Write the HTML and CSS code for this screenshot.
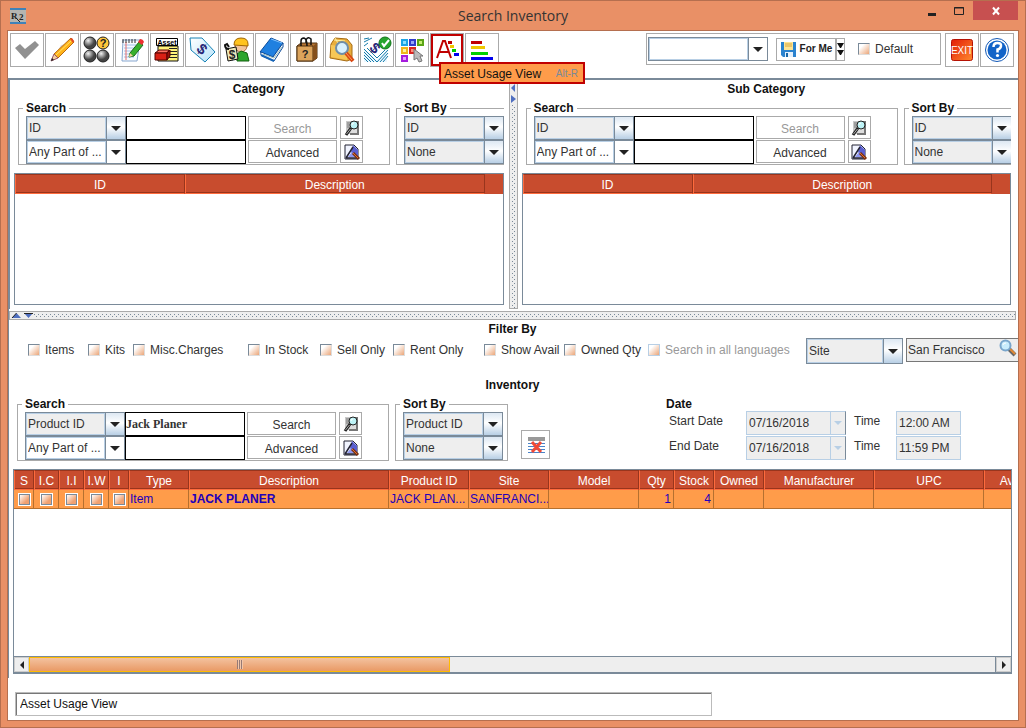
FILE: index.html
```html
<!DOCTYPE html>
<html lang="en">
<head>
<meta charset="utf-8">
<title>Search Inventory</title>
<link rel="stylesheet" href="styles.css">
</head>
<body>
<svg class="defs" aria-hidden="true">
  <symbol id="find" viewBox="0 0 18 18">
    <path d="M3 2h8v13H3z" fill="#c8c8c8"/><path d="M4 4h4M4 6h3M4 8h3" stroke="#777"/>
    <path d="M10 3h5v12H7" fill="#ddd" stroke="#777" stroke-width="2"/>
    <circle cx="11" cy="6" r="4" fill="#bdf3f6" stroke="#222"/><path d="M9 6a2 2 0 0 1 2-2" stroke="#fff" fill="none"/>
    <path d="M8 9l-5 7" stroke="#222" stroke-width="3"/><path d="M7.500 10l-4 5" stroke="#aaa"/>
  </symbol>
  <symbol id="clearfind" viewBox="0 0 18 18">
    <path d="M2 2h9l4 4v10H2z" fill="#f1f4ff" stroke="#223"/><path d="M10 2l5 5v9l-7-7z" fill="#5a5fd0"/>
    <path d="M3 15L10 4M3 15h11" fill="none" stroke="#223" stroke-width="1.500"/><path d="M5 14l4-5 4 5z" fill="#8f98f0"/>
    <path d="M10 10l6 6" stroke="#7a3010" stroke-width="3"/><path d="M10 10l5 5" stroke="#e07030"/>
  </symbol>
</svg>
<div class="window">
  <header class="titlebar">
    <svg class="logo" width="16" height="16" viewBox="0 0 16 16"><path d="M0 0h16v16H0z" fill="#b5b5b0"/><path d="M0 0h16v2H0zM0 14h16v2H0z" fill="#3f82b8"/><text x="1" y="11" class="logo-text">R</text><text x="9" y="12" class="logo-text">2</text><path d="M6 10l4 4" stroke="#222"/></svg>
    <h1>Search Inventory</h1>
    <div class="controls">
      <button class="ctl" aria-label="Minimize"><svg width="10" height="16"><path d="M1 13.500h8" stroke="#222" stroke-width="3"/></svg></button>
      <button class="ctl" aria-label="Maximize"><svg width="12" height="16"><path d="M1.500 6.500h9v7h-9zM1 7h10" fill="none" stroke="#222"/></svg></button>
      <button class="ctl close" aria-label="Close"><svg width="10" height="10"><path d="M2 1.500l6 7M8 1.500l-6 7" stroke="#fff" stroke-width="2"/></svg></button>
    </div>
  </header>

  <main class="client">
    <nav class="toolbar">
      <div class="tools">
        <button class="tool" aria-label="Select"><svg viewBox="0 0 32 32"><path d="M4 14l5-4 5 5L24 7l4 4-14 14z" fill="#919191"/></svg></button>
        <button class="tool" aria-label="Edit"><svg viewBox="0 0 32 32"><path d="M5 27L15 11l5-1-8 11z" fill="#ddd"/><path d="M8 20L25 4l3 4-16 16z" fill="#ffb319" stroke="#b96810"/><path d="M10 21L26 6" stroke="#ffe36b" stroke-width="1"/><path d="M8 20l4 4-7 3z" fill="#f4cf9d" stroke="#956"/><path d="M24 5l2-1 2 3-1 2z" fill="#e44824"/><path d="M5 27l3-1-2-2z" fill="#222"/></svg></button>
        <button class="tool" aria-label="Status"><svg viewBox="0 0 32 32"><defs><radialGradient id="ball" cx=".35" cy=".3"><stop offset="0" stop-color="#f2f2f2"/><stop offset=".5" stop-color="#999"/><stop offset="1" stop-color="#444"/></radialGradient></defs><g fill="url(#ball)" stroke="#222"><circle cx="9" cy="9" r="6"/><circle cx="9" cy="22" r="6"/><circle cx="22" cy="22" r="6"/></g><circle cx="22" cy="9" r="6" fill="#ffc63c" stroke="#222"/><text x="22" y="13" class="qmark">?</text></svg></button>
        <button class="tool" aria-label="Notes"><svg viewBox="0 0 32 32"><path d="M7 6h17l-3 21H6z" fill="#f7fbff" stroke="#88a7cf"/><path d="M8 11h12M8 14h12M8 17h11M8 20h10M8 23h10" stroke="#9fc0ea"/><path d="M10 8v18" stroke="#e86a6a"/><path d="M7 5v4M10 5v4M13 5v4M16 5v4M19 5v4" stroke="#333"/><path d="M14 19l9-11 4 3-9 11-5 1z" fill="#38b02d" stroke="#17691a"/><path d="M22 8l2-3q3 0 4 3l-2 3z" fill="#ed3030"/><path d="M14 19l-1 4 4-1z" fill="#f4cf9d"/></svg></button>
        <button class="tool" aria-label="Asset"><svg viewBox="0 0 32 32"><path d="M7 12h20v15H7z" fill="#fff37a" stroke="#111"/><path d="M18 14.500h8M18 17.500h8M18 20.500h8M18 23.500h8" stroke="#222"/><path d="M5.500 4.500h21v7h-21z" fill="#fff" stroke="#000"/><text x="16" y="10.500" class="asset">Asset</text><path d="M4 19l4-3h10l-2 3z" fill="#ff7263" stroke="#500"/><path d="M4 19h12v7H4z" fill="#d92015" stroke="#500"/><path d="M16 19l3-3v6l-3 4z" fill="#98120c" stroke="#500"/></svg></button>
        <button class="tool" aria-label="Price tag"><svg viewBox="0 0 32 32"><defs><linearGradient id="tag" x2="1" y2="1"><stop offset="0" stop-color="#fff"/><stop offset="1" stop-color="#b5e2fa"/></linearGradient></defs><path d="M4 4h12l13 14-10 10L5 16z" fill="url(#tag)" stroke="#1682b5"/><text x="0" y="5" class="dollar" transform="translate(16 15) rotate(42)">$</text></svg></button>
        <button class="tool" aria-label="Contractor"><svg viewBox="0 0 32 32"><circle cx="20" cy="12" r="6" fill="#f2c39a" stroke="#a66b42"/><path d="M13 11q0-7 7-7t7 6v2z" fill="#ffc31e" stroke="#a06500"/><path d="M16 20l4-3 6 2 2 8H16z" fill="#2ca52c" stroke="#12610f"/><path d="M5 15l10-2 2 12-10 2z" fill="#efe8b8" stroke="#111"/><path d="M8 15q-4 0-4-4l2-1 2 3" fill="none" stroke="#111" stroke-width="2"/><text x="11" y="25" class="dollar small">$</text></svg></button>
        <button class="tool" aria-label="Catalog"><svg viewBox="0 0 32 32"><path d="M4 18L15 4l12 5-10 14z" fill="#1f80e0" stroke="#0b4c9c"/><path d="M15 5l11 4" stroke="#7fc3ff"/><path d="M5 18q-1 3 1 4l12 5 9-14v-4L17 23z" fill="#fff" stroke="#0b4c9c"/><path d="M7 20l11 4 8-11" fill="none" stroke="#9bb" /><path d="M5 21l13 6" stroke="#1464b8" stroke-width="2" fill="none"/></svg></button>
        <button class="tool" aria-label="Unknown item"><svg viewBox="0 0 32 32"><path d="M6 12l4-3h16v15l-4 3H6z" fill="#b57535" stroke="#51300f"/><path d="M6 12h16v15H6z" fill="#dca45c" stroke="#51300f"/><path d="M22 12l4-3v15l-4 3z" fill="#85501c"/><path d="M10 12V7q0-3 3-3 3 1 3 8M15 9V6q2-4 5-1v6" fill="none" stroke="#111" stroke-width="1.500"/><text x="14" y="24" class="qmark">?</text></svg></button>
        <button class="tool" aria-label="Search box"><svg viewBox="0 0 32 32"><path d="M5 10l4-6 12 1 5 6v14l-5 2-17-3z" fill="#e9ae3d" stroke="#a76c12"/><path d="M5 11l16 2v13L5 23z" fill="#f7c756"/><path d="M9 4l4 7M8 6l11 1" stroke="#fff0a0"/><circle cx="16" cy="14" r="6" fill="#d8f1ff" stroke="#6f8ea8" stroke-width="2"/><path d="M20 19l7 8" stroke="#d94812" stroke-width="4"/><path d="M20 19l6 7" stroke="#ff9d55"/></svg></button>
        <button class="tool" aria-label="Approve price"><svg viewBox="0 0 32 32"><path d="M3 15v13h23V15L16 26z" fill="#eaf7ff"/><path d="M3 5l5-1M3 8l8-4M3 12l4-3M3 15l13 13M3 18l10 10M3 21l7 7M3 24l4 4M16 28l11-12M19 28l8-9M22 28l5-6M6 14l10 10 8-8" stroke="#167caa" fill="none"/><text x="0" y="5" class="dollar" transform="translate(14 14) rotate(42)">$</text><circle cx="24" cy="9" r="6" fill="#27a52c" stroke="#12751a"/><path d="M21 9l2 3 5-6" stroke="#fff" stroke-width="2" fill="none"/></svg></button>
        <button class="tool" aria-label="Pick color"><svg viewBox="0 0 32 32"><g stroke-width="2"><path d="M6 6h5v5H6z" fill="#8be0ff" stroke="#1ca4e5"/><path d="M14 6h5v5h-5z" fill="#96a6f8" stroke="#303ccc"/><path d="M22 6h5v5h-5z" fill="#c5ed75" stroke="#5ba516"/><path d="M6 14h5v5H6z" fill="#fff29a" stroke="#efb51b"/><path d="M14 14h5v5h-5z" fill="#ff8d7a" stroke="#db2420"/><path d="M6 22h5v5H6z" fill="#e6a0ff" stroke="#a51bdd"/></g><path d="M18 15v11l3-2 2 4 3-1-2-5h3z" fill="#bbb" stroke="#777"/></svg></button>
        <div class="tool-anchor">
          <button class="tool active" aria-label="Asset Usage View" aria-describedby="tip"><svg viewBox="0 0 32 32"><path d="M6 24L12 7h2l6 17M8 18h10" fill="none" stroke="#c00000" stroke-width="2"/><path d="M17 8.500h4" stroke="#c00000" stroke-width="3"/><path d="M19 12.500h4" stroke="#efc800" stroke-width="3"/><path d="M21 16.500h4" stroke="#0c0" stroke-width="3"/><path d="M23 20.500h5" stroke="#00e" stroke-width="3"/></svg></button>
          <div class="tooltip" id="tip" role="tooltip">Asset Usage View <kbd>Alt-R</kbd></div>
        </div>
        <button class="tool" aria-label="Usage chart"><svg viewBox="0 0 32 32"><path d="M5 8.500h11" stroke="#c00000" stroke-width="3"/><path d="M5 13.500h14" stroke="#efc800" stroke-width="3"/><path d="M5 19.500h17" stroke="#00d000" stroke-width="3"/><path d="M5 24.500h22" stroke="#00e" stroke-width="3"/></svg></button>
      </div>
      <div class="views">
        <select class="combo plain view-combo" aria-label="Saved view"><option></option></select>
        <button class="forme"><svg width="17" height="17" viewBox="0 0 17 17"><path d="M1 1h15v15H3l-2-2z" fill="#2b83cf"/><path d="M4 1h9v8H4z" fill="#ffe593"/><path d="M5 3h7M5 5h7" stroke="#d7a642"/><path d="M5 11h8v5H5z" fill="#e5f1fc"/><path d="M6 12h2v4H6z" fill="#1766a8"/></svg>For Me</button>
        <button class="more" aria-label="More save options"><svg width="7" height="16" viewBox="0 0 7 16"><path d="M0 2h7L4 7H3zM0 9h7l-3 5H3z" fill="#111"/></svg></button>
        <label class="check"><input type="checkbox">Default</label>
      </div>
      <div class="tools">
        <button class="tool" aria-label="Exit"><svg viewBox="0 0 32 32"><defs><linearGradient id="exit" x2="1" y2="1"><stop offset="0" stop-color="#e21b08"/><stop offset="1" stop-color="#ff8a2d"/></linearGradient></defs><rect x="5.500" y="5.500" width="21" height="21" rx="2" fill="url(#exit)" stroke="#b51204"/><text x="16" y="20" class="exit">EXIT</text></svg></button>
        <button class="tool" aria-label="Help"><svg viewBox="0 0 32 32"><circle cx="16" cy="16" r="11.500" fill="#fff" stroke="#1158b7" stroke-width="1"/><circle cx="16" cy="16" r="9.500" fill="#1263c8"/><path d="M12.500 13q0-4 4-4t3.500 3-3.500 3.500v3" fill="none" stroke="#fff" stroke-width="2.500"/><circle cx="16.500" cy="21.500" r="1.600" fill="#fff"/></svg></button>
      </div>
    </nav>

    <div class="work">
      <div class="panes">
        <section class="pane">
          <h2>Category</h2>
          <div class="criteria">
            <fieldset class="search"><legend>Search</legend>
              <div class="fields">
                <select class="combo" aria-label="Category field"><option>ID</option></select><input class="term" type="text" aria-label="Category term"><button class="action" disabled>Search</button><button class="mini" aria-label="Find category"><svg><use href="#find"/></svg></button>
                <select class="combo plain" aria-label="Category match"><option>Any Part of ...</option></select><input class="term" type="text" aria-label="Second category term"><button class="action">Advanced</button><button class="mini" aria-label="Clear category search"><svg><use href="#clearfind"/></svg></button>
              </div>
            </fieldset>
            <fieldset class="sort open"><legend>Sort By</legend>
              <select class="combo" aria-label="Category first sort"><option>ID</option></select>
              <select class="combo" aria-label="Category second sort"><option>None</option></select>
            </fieldset>
          </div>
          <div class="list"><table><colgroup><col class="w-id"><col><col class="w-end"></colgroup><thead><tr><th>ID</th><th>Description</th><td class="corner"></td></tr></thead></table></div>
        </section>
        <div class="divider upright"><svg width="7" height="24" viewBox="0 0 7 24"><path d="M5 3v8L1 7zM1 14v8l5-4z" fill="#4f6fc0"/></svg></div>
        <section class="pane">
          <h2>Sub Category</h2>
          <div class="criteria">
            <fieldset class="search"><legend>Search</legend>
              <div class="fields">
                <select class="combo" aria-label="Sub category field"><option>ID</option></select><input class="term" type="text" aria-label="Sub category term"><button class="action" disabled>Search</button><button class="mini" aria-label="Find sub category"><svg><use href="#find"/></svg></button>
                <select class="combo plain" aria-label="Sub category match"><option>Any Part of ...</option></select><input class="term" type="text" aria-label="Second sub category term"><button class="action">Advanced</button><button class="mini" aria-label="Clear sub category search"><svg><use href="#clearfind"/></svg></button>
              </div>
            </fieldset>
            <fieldset class="sort open"><legend>Sort By</legend>
              <select class="combo" aria-label="Sub category first sort"><option>ID</option></select>
              <select class="combo" aria-label="Sub category second sort"><option>None</option></select>
            </fieldset>
          </div>
          <div class="list"><table><colgroup><col class="w-id"><col><col class="w-end"></colgroup><thead><tr><th>ID</th><th>Description</th><td class="corner"></td></tr></thead></table></div>
        </section>
      </div>
      <div class="divider level"><svg width="24" height="7" viewBox="0 0 24 7"><path d="M2 6h9L6.500 1zM14 1h9l-4.500 5z" fill="#4f6fc0"/><path d="M2 6L6.500 1M14 1.500h9" stroke="#222"/></svg></div>

      <section class="inventory">
        <h2>Filter By</h2>
        <div class="filters">
          <label class="check"><input type="checkbox">Items</label>
          <label class="check"><input type="checkbox">Kits</label>
          <label class="check"><input type="checkbox">Misc.Charges</label>
          <label class="check"><input type="checkbox">In Stock</label>
          <label class="check"><input type="checkbox">Sell Only</label>
          <label class="check"><input type="checkbox">Rent Only</label>
          <label class="check"><input type="checkbox">Show Avail</label>
          <label class="check"><input type="checkbox">Owned Qty</label>
          <label class="check off"><input type="checkbox" disabled>Search in all languages</label>
          <select class="combo site" aria-label="Location type"><option>Site</option></select>
          <div class="lookup"><input type="text" value="San Francisco" aria-label="Site name"><svg width="18" height="18" viewBox="0 0 18 18"><path d="M10 10l6 6" stroke="#666" stroke-width="4"/><path d="M11 10l5 5" stroke="#e28a34" stroke-width="2"/><circle cx="6.500" cy="6.500" r="5" fill="#c9ecfc" stroke="#79a5cb" stroke-width="2"/><path d="M4 6q0-2 3-2" stroke="#fff" fill="none"/></svg></div>
        </div>
        <h2>Inventory</h2>
        <div class="criteria">
          <fieldset class="search"><legend>Search</legend>
            <div class="fields">
              <select class="combo" aria-label="Inventory field"><option>Product ID</option></select><input class="term" type="text" value="Jack Planer" aria-label="Inventory term"><button class="action">Search</button><button class="mini" aria-label="Find inventory"><svg><use href="#find"/></svg></button>
              <select class="combo plain" aria-label="Inventory match"><option>Any Part of ...</option></select><input class="term" type="text" aria-label="Second inventory term"><button class="action">Advanced</button><button class="mini" aria-label="Clear inventory search"><svg><use href="#clearfind"/></svg></button>
            </div>
          </fieldset>
          <fieldset class="sort"><legend>Sort By</legend>
            <select class="combo" aria-label="Inventory first sort"><option>Product ID</option></select>
            <select class="combo" aria-label="Inventory second sort"><option>None</option></select>
          </fieldset>
          <button class="clear" aria-label="Clear results"><svg width="18" height="18" viewBox="0 0 18 18"><path d="M1 1h17v4H1z" fill="#999"/><path d="M1 7.500h17M1 10.500h17M1 13.500h17M1 16.500h17" stroke="#4a83c8"/><path d="M5 6l9 10M14 6L5 16" stroke="#f04a38" stroke-width="3"/></svg></button>
          <div class="dates">
            <h3>Date</h3>
            <label for="d1">Start Date</label><select id="d1" class="date" disabled><option>07/16/2018</option></select><label for="t1">Time</label><input id="t1" type="text" value="12:00 AM" readonly>
            <label for="d2">End Date</label><select id="d2" class="date" disabled><option>07/16/2018</option></select><label for="t2">Time</label><input id="t2" type="text" value="11:59 PM" readonly>
          </div>
        </div>
        <div class="results">
          <div class="grid">
            <table>
              <colgroup><col class="c20"><col class="c25"><col class="c25"><col class="c25"><col class="c20"><col class="c60"><col class="c200"><col class="c80"><col class="c80"><col class="c90"><col class="c35"><col class="c40"><col class="c50"><col class="c110"><col class="c110"><col class="c80"></colgroup>
              <thead><tr><th>S</th><th>I.C</th><th>I.I</th><th>I.W</th><th>I</th><th>Type</th><th>Description</th><th>Product ID</th><th>Site</th><th>Model</th><th>Qty</th><th>Stock</th><th>Owned</th><th>Manufacturer</th><th>UPC</th><th>Available</th></tr></thead>
              <tbody><tr><td><input type="checkbox" aria-label="S"></td><td><input type="checkbox" aria-label="I.C"></td><td><input type="checkbox" aria-label="I.I"></td><td><input type="checkbox" aria-label="I.W"></td><td><input type="checkbox" aria-label="I"></td><td>Item</td><td><b>JACK PLANER</b></td><td>JACK PLAN...</td><td>SANFRANCI...</td><td></td><td class="num">1</td><td class="num">4</td><td></td><td></td><td></td><td></td></tr></tbody>
            </table>
          </div>
          <div class="scroll">
            <button aria-label="Scroll left"><svg width="6" height="8"><path d="M5 0v8L1 4z" fill="#222"/></svg></button>
            <div class="track"><div class="thumb"><i></i></div></div>
            <button aria-label="Scroll right"><svg width="6" height="8"><path d="M1 0v8l4-4z" fill="#222"/></svg></button>
          </div>
        </div>
      </section>
    </div>
    <footer><input class="status" type="text" value="Asset Usage View" aria-label="Status" readonly></footer>
  </main>
</div>
</body>
</html>
```
FILE: styles.css
```css
* { box-sizing: border-box; }
body { margin: 0; font: 12px/14px "Liberation Sans", Arial, sans-serif; color: #333; }
button, input, select { font: inherit; color: inherit; margin: 0; padding: 0; border-radius: 0; }
button { background: #fff; border: 1px solid #aaa; display: flex; align-items: center; justify-content: center; }
h1, h2, h3 { margin: 0; }
.defs { display: none; }

.window { min-height: 100vh; display: flex; flex-direction: column; background: #e99066; border: 1px solid #b56f4f; padding: 0 7px 7px; }
.titlebar { height: 29px; display: grid; grid-template-columns: 1fr auto 1fr; align-items: center; }
.titlebar h1 { font: 14px/20px "Open Sans", "Noto Sans", sans-serif; color: #333; }
.logo { margin-left: 2px; }
.logo-text { font: bold 9px "Liberation Serif", serif; fill: #222; }
.controls { display: flex; justify-content: flex-end; align-self: start; gap: 16px; }
.ctl { background: none; border: 0; height: 19px; align-items: flex-start; }
.ctl.close { width: 45px; background: #c75050; align-items: center; margin-left: -8px; }
.client { flex: 1; display: flex; flex-direction: column; background: #fff; outline: 1px solid #b56f4f; margin-top: 1px; min-width: 0; }

.toolbar { display: flex; align-items: flex-start; padding: 2px 4px 0 2px; height: 47px; }
.tools { display: flex; gap: 1px; }
.tool { width: 34px; height: 34px; flex: none; }
.tool svg { width: 32px; height: 32px; display: block; }
.tool.active { box-shadow: inset 0 0 0 2px #c00000; }
.tool-anchor { position: relative; }
.tooltip { position: absolute; left: 9px; top: 29px; z-index: 2; width: 146px; height: 22px; display: flex; align-items: center; justify-content: space-between; padding: 2px 5px 0 3px; border: 2px solid #c00000; background: #ff9c4a; color: #111; white-space: nowrap; }
.tooltip kbd { font: 10px/14px "Liberation Sans", Arial, sans-serif; color: #7a8a99; }
.qmark { font: bold 11px "Liberation Sans", sans-serif; text-anchor: middle; fill: #222; }
.dollar { font: bold 15px "Liberation Sans", sans-serif; text-anchor: middle; fill: #282878; }
.dollar.small { font-size: 12px; fill: #222; }
.asset { font: bold 7px "Liberation Sans", sans-serif; text-anchor: middle; }
.exit { font: 10px "Liberation Sans", sans-serif; text-anchor: middle; fill: #fff; }
.views { display: flex; align-items: center; width: 295px; height: 32px; margin: 0 4px 0 auto; padding-left: 1px; border: 1px solid #aaa; }
.view-combo.combo { width: 120px; margin-right: 8px; }
.forme { width: 60px; height: 23px; gap: 3px; font: bold 10px/14px "Liberation Sans", Arial, sans-serif; white-space: nowrap; color: #222; }
.more { width: 9px; height: 23px; margin: 0 13px 0 0; }

.check { display: flex; align-items: center; gap: 5px; white-space: nowrap; }
input[type="checkbox"] { appearance: none; flex: none; width: 12px; height: 12px; border: 1px solid #ddd; border-top-color: #7a8a99; border-left-color: #7a8a99; background: linear-gradient(135deg, #fff 25%, #eba679); }
.off { color: #999; }
.off input[type="checkbox"] { border-color: #b8cfe5; }

.combo { appearance: none; display: block; width: 100px; height: 24px; padding-left: 2px; border: 1px solid #7a8a99;
  background: url("data:image/svg+xml,%3Csvg xmlns='http://www.w3.org/2000/svg' width='10' height='5'%3E%3Cpath d='M0 0h10L5 5z' fill='%23222'/%3E%3C/svg%3E") right 4px center no-repeat,
    linear-gradient(#dde8f3, #fff 45%, #b8cfe5) right top / 18px 100% no-repeat,
    linear-gradient(#7a8a99, #7a8a99) right 18px top / 1px 100% no-repeat,
    linear-gradient(#eee, #eee) 1px 1px / calc(100% - 21px) calc(100% - 2px) no-repeat,
    #b8cfe5; }
.plain { background: url("data:image/svg+xml,%3Csvg xmlns='http://www.w3.org/2000/svg' width='10' height='5'%3E%3Cpath d='M0 0h10L5 5z' fill='%23222'/%3E%3C/svg%3E") right 4px center no-repeat,
    linear-gradient(#fff, #fff) right top / 18px 100% no-repeat,
    linear-gradient(#7a8a99, #7a8a99) right 18px top / 1px 100% no-repeat,
    linear-gradient(#fff, #fff) 1px 1px / calc(100% - 21px) calc(100% - 2px) no-repeat,
    #b8cfe5; }

.work { flex: 1; display: flex; flex-direction: column; border: solid #7a8a99; border-width: 2px 0 0 1px; min-width: 0; }
h2 { font: bold 12px/18px "Liberation Sans", Arial, sans-serif; color: #111; text-align: center; }
.panes { display: flex; border-left: 1px solid #7a8a99; margin-right: 2px; }
.pane { flex: 1; min-width: 0; padding: 0 5px 0 4px; }
.criteria { display: flex; gap: 6px; padding: 3px 0 8px 4px; overflow: hidden; }
fieldset { margin: 0; border: 1px solid #aaa; padding: 1px 7px 0; min-width: 0; flex: none; }
legend { font-weight: bold; color: #111; padding: 0 3px; margin-left: -3px; }
.search { width: 372px; }
.fields { display: grid; grid-template-columns: 100px 120px 91px 28px; }
.fields .action { margin-left: 2px; width: 89px; }
.fields .mini { margin-left: 3px; width: 23px; }
.term { width: 120px; height: 24px; border: 1px solid #000; font: bold 12px/14px "Liberation Serif", serif; }
.action, .mini { height: 23px; }
.action { padding-top: 2px; }
.action:disabled { color: #999; }
.mini svg { width: 18px; height: 18px; }
.sort { width: 113px; }
.sort.open { width: 108px; border-right: 0; padding-right: 0; }
.list { height: 132px; border: 1px solid #7a8a99; overflow: hidden; }
table { width: 100%; table-layout: fixed; border-collapse: separate; border-spacing: 0; }
th { height: 20px; padding: 1px 0 0; font-weight: normal; color: #fff; background: #c84c2e; border: 1px solid #ff6b3d; border-top-color: #98351d; border-right-color: #98351d; box-shadow: inset 0 -1px #98351d; white-space: nowrap; text-align: center; }
.corner { background: #c84c2e; }
.w-id { width: 170px; }
.w-end { width: 18px; }

.divider { border: 1px solid #aaa; background: #eee; }
.upright { width: 9px; height: 229px; background: url("data:image/svg+xml,%3Csvg xmlns='http://www.w3.org/2000/svg' width='3' height='4'%3E%3Cpath d='M0 0h1v1H0zM2 2h1v1H2z' fill='%237a8a99'/%3E%3C/svg%3E") center top repeat-y #eee; }
.level { height: 9px; display: flex; margin-top: 2px; margin-right: 2px; background: url("data:image/svg+xml,%3Csvg xmlns='http://www.w3.org/2000/svg' width='4' height='3'%3E%3Cpath d='M0 0h1v1H0zM2 2h1v1H2z' fill='%237a8a99'/%3E%3C/svg%3E") left center repeat-x #eee; }
.divider svg { display: block; background: #eee; flex: none; }

.inventory { flex: 1; display: flex; flex-direction: column; padding: 0 6px 4px 4px; min-width: 0; }
.filters { display: grid; grid-template-columns: 60px 45px 115px 72px 73px 91px 80px 84px 158px 100px 1fr; align-items: start; height: 38px; margin-right: -6px; padding-left: 15px; }
.filters .check { height: 24px; }
.filters .site { width: 97px; height: 26px; }
.lookup { display: flex; height: 24px; border: 1px solid #777; border-right: 0; background: #eee; overflow: hidden; }
.lookup input { flex: 1; min-width: 0; border: 0; background: none; padding-left: 1px; }
.lookup svg { margin: 0 1px; flex: none; }
.clear { width: 29px; height: 29px; margin: 33px 0 0 7px; }
.dates { display: grid; grid-template-columns: 80px 108px 42px 65px; grid-template-rows: 14px 25px 25px; margin-left: 110px; margin-bottom: -4px; }
.dates h3 { grid-column: 1 / -1; font: bold 12px/14px "Liberation Sans", Arial, sans-serif; color: #111; }
.dates label { padding: 3px 0 0 3px; }
.dates label + select + label { padding-left: 0; }
.dates input, .date { height: 24px; border: 1px solid #b8cfe5; background: #eee; padding-left: 2px; }
.date { appearance: none; width: 100px; opacity: 1; color: #333; background: url("data:image/svg+xml,%3Csvg xmlns='http://www.w3.org/2000/svg' width='8' height='4'%3E%3Cpath d='M0 0h8L4 4z' fill='%23b8cfe5'/%3E%3C/svg%3E") right 3px center no-repeat, linear-gradient(#b8cfe5, #b8cfe5) right 14px top / 1px 100% no-repeat, #eee; border-right-color: #7a8a99; }
.results { flex: 1; display: flex; flex-direction: column; border: 1px solid #7a8a99; min-width: 0; }
.grid { flex: 1; overflow: hidden; }
.grid table { width: 1050px; }
.grid td { height: 19px; padding: 0; background: #ff9c4a; color: #20b; border: solid #b5702f; border-width: 0 1px 1px 0; white-space: nowrap; overflow: hidden; line-height: 14px; padding-left: 1px; }
.grid td input[type="checkbox"] { display: block; margin: 0 auto; width: 11px; height: 11px; border-color: #7a8a99; outline: 1px solid #fff; background: linear-gradient(135deg, #fff, #f0a070 70%); }
.grid td.num { text-align: right; padding-right: 2px; }
.c20 { width: 20px; } .c25 { width: 25px; } .c35 { width: 35px; } .c40 { width: 40px; } .c50 { width: 50px; }
.c60 { width: 60px; } .c80 { width: 80px; } .c90 { width: 90px; } .c110 { width: 110px; } .c200 { width: 200px; }
.scroll { display: flex; height: 17px; border: solid #7a8a99; border-width: 1px 0; background: #eee; }
.scroll button { width: 15px; border: 1px solid #ccc; background: #eee; }
.track { flex: 1; border-right: 1px solid #7a8a99; }
.thumb { width: 43.600%; height: 15px; display: flex; align-items: center; justify-content: center; border: 1px solid #fb0; background: linear-gradient(#f3c29f, #e99a66); }
.thumb i { width: 6px; height: 9px; background: repeating-linear-gradient(90deg, #967a75 0 1px, #f3c7a9 1px 2px); }
footer { padding: 14px 7px 4px; }
.status { display: block; width: 70%; height: 24px; padding-left: 4px; border: 1px solid #bbb; box-shadow: inset 1px 1px #777; color: #111; }
```
